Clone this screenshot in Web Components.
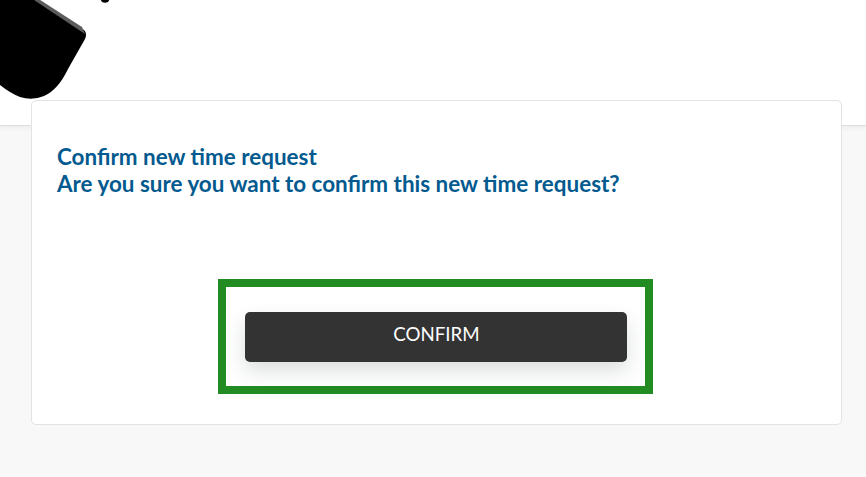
<!DOCTYPE html>
<html><head><meta charset="utf-8"><style>
html,body{margin:0;padding:0;background:#f8f8f8;height:100%;overflow:hidden}
body{font-family:Lato,"Liberation Sans",sans-serif}
</style></head><body>
<template id="t-header"><style>
:host{display:block;height:125px;background:#fff;border-bottom:1px solid #dedede;box-shadow:0 2px 5px rgba(0,0,0,.05);position:relative}
svg{position:absolute;left:0;top:0}
</style><svg width="200" height="125" viewBox="0 0 200 125" aria-hidden="true">
<defs><filter id="b" x="-5%" y="-5%" width="110%" height="110%"><feGaussianBlur stdDeviation=".7"/></filter></defs>
<g filter="url(#b)">
<path d="M30 -4 L84 30 Q87.5 33 85 39 L68 69 Q58 90 44 96 Q32 101 20 97 Q10 93 0 85 L0 -4Z" fill="#000"/>
<path d="M34 -4 L82 27 L85 34 L28 -4Z" fill="#5c5c5c"/>
<path d="M99 -3 L111 -3 L108 2 Q105 3.5 102 2Z" fill="#000"/>
</g></svg></template>
<template id="t-card"><style>
:host{display:block;box-sizing:border-box;width:811px;height:325px;margin:-26px 0 0 31px;background:#fff;border:1px solid #e3e3e3;border-radius:5px;padding:42px 25px 0;position:relative}
.msg{color:#035a8f;font-size:22.45px;font-weight:700;line-height:27px}
.act{display:flex;justify-content:center;margin-top:82px;padding-right:2px}
</style><div class="msg"><slot name="title"></slot><br><slot name="body"></slot></div><div class="act"><slot></slot></div></template>
<template id="t-highlight"><style>
:host{display:block;box-sizing:border-box;width:435px;height:115px;border:8px solid #228b22;padding:25px 19px 0 19px}
</style><slot></slot></template>
<template id="t-button"><style>
:host{display:flex;align-items:center;justify-content:center;width:382px;height:50px;box-sizing:border-box;background:#333;color:#fff;border-radius:5px;font-size:18.7px;font-weight:400;padding:0 0 7px 1px;box-shadow:0 9px 20px rgba(60,75,80,.18)}
</style><slot></slot></template>
<app-header></app-header>
<app-card>
<span slot="title">Confirm new time request</span>
<span slot="body">Are you sure you want to confirm this new time request?</span>
<app-highlight><app-button>CONFIRM</app-button></app-highlight>
</app-card>
<script>
for(const [n,t] of [['app-header','t-header'],['app-card','t-card'],['app-highlight','t-highlight'],['app-button','t-button']]){
customElements.define(n,class extends HTMLElement{constructor(){super();this.attachShadow({mode:'open'}).appendChild(document.getElementById(t).content.cloneNode(true))}})}
</script></body></html>
